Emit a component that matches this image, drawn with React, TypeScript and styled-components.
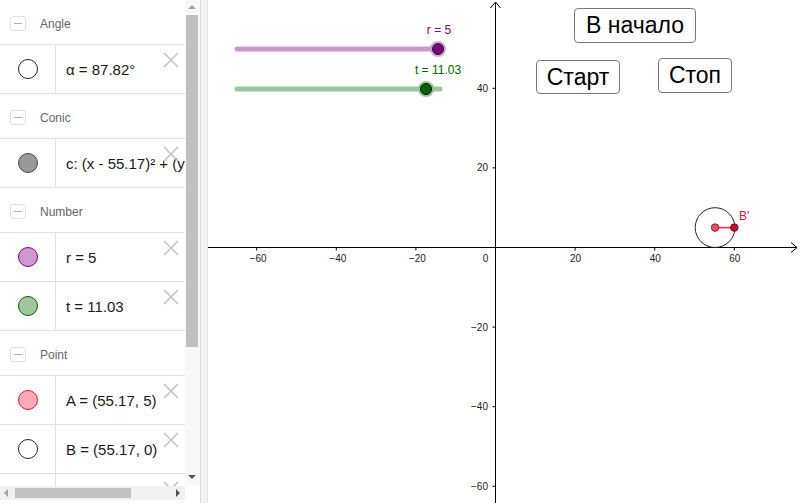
import React from "react";
import styled, { createGlobalStyle } from "styled-components";

const GlobalStyle = createGlobalStyle`
  html, body {
    margin: 0;
    padding: 0;
    background: #fff;
  }
  body {
    font-family: "Liberation Sans", Arial, sans-serif;
    overflow: hidden;
  }
`;

const Frame = styled.div`
  display: flex;
  width: 800px;
  height: 503px;
  overflow: hidden;
`;

/* ---------- algebra view ---------- */

const AlgebraPanel = styled.div`
  width: 200px;
  flex-shrink: 0;
  display: flex;
  flex-direction: column;
`;

const ListArea = styled.div`
  display: flex;
  height: 486px;
`;

const List = styled.div`
  width: 185px;
  overflow: hidden;
`;

const GroupHeader = styled.div`
  box-sizing: border-box;
  height: 45px;
  padding-top: 3px;
  border-bottom: 1px solid #e2e2e2;
  display: flex;
  align-items: center;
  gap: 14px;
  padding-left: 10px;
  color: #666;
  font-size: 12px;
`;

const Toggle = styled.span`
  position: relative;
  width: 14px;
  height: 13px;
  border: 1px solid #e0e0e0;
  border-radius: 3px;

  &::after {
    content: "";
    position: absolute;
    left: 3px;
    right: 3px;
    top: 6px;
    height: 1px;
    background: #b0b0b0;
  }
`;

const ItemRow = styled.div`
  position: relative;
  display: flex;
  height: 48px;
  border-bottom: 1px solid #e2e2e2;
`;

const MarbleCell = styled.div`
  width: 55px;
  flex-shrink: 0;
  border-right: 1px solid #e2e2e2;
  display: flex;
  align-items: center;
  justify-content: center;
`;

const Marble = styled.div<{ $fill: string; $stroke: string }>`
  width: 18px;
  height: 18px;
  border-radius: 50%;
  background: ${(p) => p.$fill};
  border: 1px solid ${(p) => p.$stroke};
`;

const Value = styled.div`
  display: flex;
  align-items: center;
  padding-left: 10px;
  font-size: 15px;
  color: #1a1a1a;
  white-space: nowrap;
`;

const CloseIcon = styled.svg`
  position: absolute;
  top: 7px;
  right: 6px;
`;

const VScroll = styled.div`
  position: relative;
  width: 15px;
  background: #f8f8f8;
`;

const VThumb = styled.div`
  position: absolute;
  left: 1px;
  top: 15px;
  width: 12px;
  height: 332px;
  background: #c1c1c1;
`;

const Arrow = styled.div<{ $dir: "up" | "down" | "left" | "right"; $dim?: boolean }>`
  position: absolute;
  width: 0;
  height: 0;
  ${(p) => {
    const c = p.$dim ? "#a3a3a3" : "#505050";
    switch (p.$dir) {
      case "up":
        return `border-left: 4px solid transparent; border-right: 4px solid transparent; border-bottom: 4px solid ${c}; top: 5px; left: 3px;`;
      case "down":
        return `border-left: 4px solid transparent; border-right: 4px solid transparent; border-top: 4px solid ${c}; bottom: 7px; left: 3px;`;
      case "left":
        return `border-top: 4px solid transparent; border-bottom: 4px solid transparent; border-right: 4px solid ${c}; top: 3px; left: 4px;`;
      case "right":
        return `border-top: 4px solid transparent; border-bottom: 4px solid transparent; border-left: 4px solid ${c}; top: 3px; right: 5px;`;
    }
  }}
`;

const HScrollRow = styled.div`
  display: flex;
  height: 14px;
`;

const HScroll = styled.div`
  position: relative;
  width: 185px;
  background: #f1f1f1;
`;

const HThumb = styled.div`
  position: absolute;
  left: 15px;
  top: 2px;
  width: 116px;
  height: 10px;
  background: #c1c1c1;
`;

const Splitter = styled.div`
  width: 6px;
  flex-shrink: 0;
  background: #f4f4f4;
  border-left: 1px solid #dcdcdc;
`;

/* ---------- graphics view ---------- */

const Graphics = styled.div`
  position: relative;
  flex: 1;
  background: #fff;
  border-left: 1px solid #e4e4e4;
`;

const Canvas = styled.svg`
  display: block;
  position: absolute;
  left: 0;
  top: 0;
`;

const CanvasButton = styled.button<{ $left: number; $top: number; $w: number; $h: number }>`
  position: absolute;
  left: ${(p) => p.$left}px;
  top: ${(p) => p.$top}px;
  width: ${(p) => p.$w}px;
  height: ${(p) => p.$h}px;
  padding: 0;
  background: #fff;
  border: 1px solid #7a7a7a;
  border-radius: 4px;
  font-family: "Liberation Sans", Arial, sans-serif;
  font-size: 23px;
  color: #000;
`;

const GX = 208; // page x where the graphics view begins
const OX = 495.5;
const OY = 247.5;
const S = 3.98;

const Close = () => (
  <CloseIcon width="16" height="16" viewBox="0 0 16 16">
    <path d="M1 1 L15 15 M15 1 L1 15" stroke="#c4c4c4" strokeWidth="1.6" fill="none" />
  </CloseIcon>
);

type Item = { fill: string; stroke: string; text: string };
type Group = { name: string; items: Item[] };

const groups: Group[] = [
  { name: "Angle", items: [{ fill: "#fff", stroke: "#222", text: "α = 87.82°" }] },
  { name: "Conic", items: [{ fill: "#999", stroke: "#444", text: "c: (x - 55.17)² + (y" }] },
  {
    name: "Number",
    items: [
      { fill: "#cc99cc", stroke: "#800080", text: "r = 5" },
      { fill: "#9fc59f", stroke: "#006400", text: "t = 11.03" },
    ],
  },
  {
    name: "Point",
    items: [
      { fill: "#ffa8b8", stroke: "#dc143c", text: "A = (55.17, 5)" },
      { fill: "#fff", stroke: "#222", text: "B = (55.17, 0)" },
      { fill: "#cc1030", stroke: "#660010", text: "" },
    ],
  },
];

const xTicks = [-60, -40, -20, 20, 40, 60];
const yTicks = [40, 20, -20, -40, -60];
const fmt = (n: number) => (n < 0 ? `\u2212${-n}` : `${n}`);

const Plot = () => {
  const ax = OX + 55.17 * S;
  const ay = OY - 5 * S;
  const bx = OX + 60 * S;
  return (
    <Canvas width={800 - GX} height={503} viewBox={`${GX} 0 ${800 - GX} 503`}>
      {/* axes */}
      <line x1={GX} y1={OY} x2={797} y2={OY} stroke="#000" strokeWidth="1" />
      <polyline points={`791,${OY - 5} 797,${OY} 791,${OY + 5}`} fill="none" stroke="#000" />
      <line x1={OX} y1={2} x2={OX} y2={503} stroke="#000" strokeWidth="1" />
      <polyline points={`${OX - 5},8 ${OX},2 ${OX + 5},8`} fill="none" stroke="#000" />
      {xTicks.map((v) => {
        const x = OX + v * S;
        return (
          <g key={`x${v}`}>
            <line x1={x} y1={OY} x2={x} y2={OY + 3} stroke="#000" />
            <text x={x + (v < 0 ? 1.5 : 0.5)} y={OY + 14} fontSize="10" textAnchor="middle" fill="#222">
              {fmt(v)}
            </text>
          </g>
        );
      })}
      <text x={485.5} y={OY + 14} fontSize="10" textAnchor="middle" fill="#222">
        0
      </text>
      {yTicks.map((v) => {
        const y = OY - v * S;
        return (
          <g key={`y${v}`}>
            <line x1={OX - 3} y1={y} x2={OX} y2={y} stroke="#000" />
            <text x={488} y={y + 3.5} fontSize="10" textAnchor="end" fill="#222">
              {fmt(v)}
            </text>
          </g>
        );
      })}

      {/* sliders */}
      <line x1={237} y1={49} x2={438} y2={49} stroke="#cc99cc" strokeWidth="5" strokeLinecap="round" />
      <circle cx={438} cy={49} r={8} fill="#cc99cc" opacity="0.85" />
      <circle cx={438} cy={49} r={5.5} fill="#800080" stroke="#222" strokeWidth="1" />
      <text x={439} y={34} fontSize="12" textAnchor="middle" fill="#800080">
        r = 5
      </text>
      <line x1={237} y1={89} x2={440} y2={89} stroke="#9fc59f" strokeWidth="5" strokeLinecap="round" />
      <circle cx={426} cy={89} r={8} fill="#8fbf8f" opacity="0.9" />
      <circle cx={426} cy={89} r={5.5} fill="#006400" stroke="#111" strokeWidth="1" />
      <text x={438} y={74} fontSize="12" textAnchor="middle" fill="#006400">
        t = 11.03
      </text>

      {/* construction */}
      <circle cx={ax} cy={ay} r={5 * S} fill="none" stroke="#222" strokeWidth="1" />
      <line x1={ax} y1={ay} x2={bx} y2={ay} stroke="#e0304f" strokeWidth="1.6" />
      <circle cx={ax} cy={ay} r={3.8} fill="#ec4d6b" stroke="#7a1020" strokeWidth="0.8" />
      <circle cx={bx} cy={ay} r={3.8} fill="#c81030" stroke="#5a0010" strokeWidth="0.8" />
      <text x={739} y={220} fontSize="12" fill="#dc143c">
        B'
      </text>
    </Canvas>
  );
};

export default function App() {
  return (
    <>
      <GlobalStyle />
      <Frame>
        <AlgebraPanel>
          <ListArea>
            <List>
              {groups.map((g) => (
                <React.Fragment key={g.name}>
                  <GroupHeader>
                    <Toggle />
                    {g.name}
                  </GroupHeader>
                  {g.items.map((it, i) => (
                    <ItemRow key={`${g.name}${i}`}>
                      <MarbleCell>
                        <Marble $fill={it.fill} $stroke={it.stroke} />
                      </MarbleCell>
                      {it.text && <Value>{it.text}</Value>}
                      <Close />
                    </ItemRow>
                  ))}
                </React.Fragment>
              ))}
            </List>
            <VScroll>
              <Arrow $dir="up" $dim />
              <VThumb />
              <Arrow $dir="down" />
            </VScroll>
          </ListArea>
          <HScrollRow>
            <HScroll>
              <Arrow $dir="left" $dim />
              <HThumb />
              <Arrow $dir="right" />
            </HScroll>
          </HScrollRow>
        </AlgebraPanel>
        <Splitter />
        <Graphics>
          <Plot />
          <CanvasButton $left={574 - GX} $top={8} $w={122} $h={35}>
            В начало
          </CanvasButton>
          <CanvasButton $left={536 - GX} $top={60} $w={84} $h={34}>
            Старт
          </CanvasButton>
          <CanvasButton $left={658 - GX} $top={58} $w={74} $h={35}>
            Стоп
          </CanvasButton>
        </Graphics>
      </Frame>
    </>
  );
}
